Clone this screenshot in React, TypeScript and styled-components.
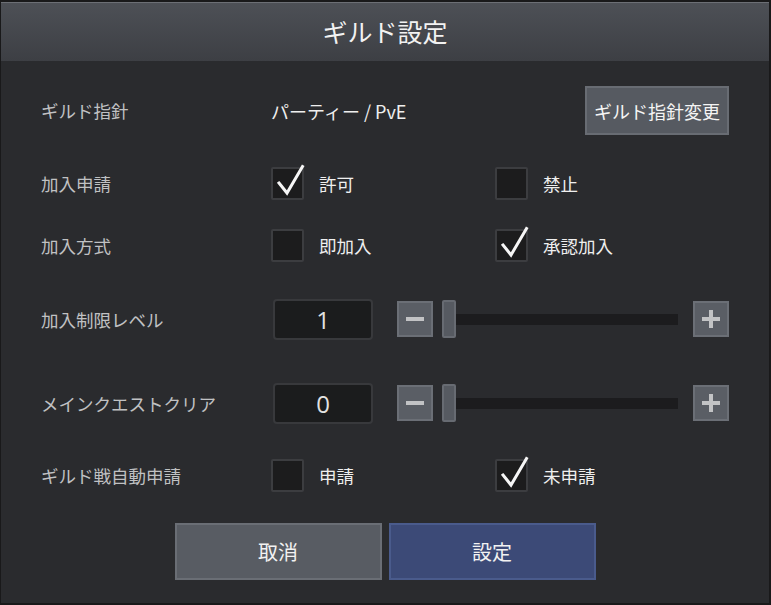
import styled, { createGlobalStyle } from "styled-components";

const GlobalStyle = createGlobalStyle`
  html, body {
    margin: 0;
    padding: 0;
    background: #161617;
  }
  * {
    box-sizing: border-box;
  }
`;

const Frame = styled.div`
  width: 771px;
  height: 605px;
  display: flex;
  flex-direction: column;
  background: #2a2b2e;
  border-top: 2px solid #19191a;
  border-left: 1px solid #19191a;
  border-right: 2px solid #19191a;
  border-bottom: 2px solid #19191a;
  font-family: "Noto Sans CJK JP", "Noto Sans", sans-serif;
  overflow: hidden;
`;

const TitleBar = styled.div`
  height: 59px;
  flex: none;
  display: flex;
  align-items: center;
  justify-content: center;
  background: linear-gradient(#4d5056, #3d3f44);
  border-top: 1px solid #6c6f75;
  color: #f2f2f2;
  font-size: 25px;
  padding-bottom: 2px;
`;

const Body = styled.div`
  flex: 1;
  padding: 19px 40px 0 40px;
  display: flex;
  flex-direction: column;
`;

const Row = styled.div<{ $h: number }>`
  height: ${(p) => p.$h}px;
  display: grid;
  grid-template-columns: 230px 224px 1fr;
  align-items: center;
`;

const SliderRow = styled.div<{ $h: number }>`
  height: ${(p) => p.$h}px;
  display: grid;
  grid-template-columns: 230px 1fr;
  align-items: center;
`;

const Label = styled.div`
  color: #c0c1c3;
  font-size: 17.5px;
`;

const Value = styled.div`
  color: #efefef;
  font-size: 18px;
`;

const ActionButton = styled.button`
  justify-self: end;
  width: 144px;
  height: 49px;
  background: #565a61;
  border: 2px solid #686c73;
  color: #f4f4f4;
  font-family: inherit;
  font-size: 18px;
  padding: 0;
`;

const Option = styled.label`
  display: flex;
  align-items: center;
  gap: 15px;
  color: #efefef;
  font-size: 17.5px;
`;

const Box = styled.span`
  position: relative;
  width: 33px;
  height: 33px;
  background: #1c1c1d;
  border: 2px solid #3c3d40;
  border-radius: 2px;
  flex: none;

  svg {
    position: absolute;
    left: 2px;
    top: -6px;
    overflow: visible;
  }
`;

function Check({ on, text }: { on?: boolean; text: string }) {
  return (
    <Option>
      <Box>
        {on && (
          <svg width="28" height="32" viewBox="0 0 28 32">
            <path d="M4 20 L12 30 L27.5 3.5" fill="none" stroke="#f6f6f6" strokeWidth="3" strokeLinecap="square" />
          </svg>
        )}
      </Box>
      {text}
    </Option>
  );
}

const SliderWrap = styled.div`
  display: flex;
  align-items: center;
`;

const NumberBox = styled.div`
  width: 100px;
  height: 41px;
  margin-left: 2px;
  margin-right: 24px;
  background: #1b1c1d;
  border: 2px solid #38393c;
  border-radius: 4px;
  display: flex;
  align-items: center;
  justify-content: center;
  color: #e2e2e2;
  font-family: "Open Sans", "Noto Sans", sans-serif;
  font-size: 24px;
`;

const StepButton = styled.div`
  width: 36px;
  height: 36px;
  flex: none;
  background: #5a5e65;
  border: 2px solid #6b6f76;
  display: flex;
  align-items: center;
  justify-content: center;
`;

const Track = styled.div`
  flex: 1;
  height: 11px;
  margin: 0 15px 0 9px;
  background: #1c1c1e;
  position: relative;
  display: flex;
  align-items: center;
`;

const Thumb = styled.div`
  position: absolute;
  left: 0;
  width: 14px;
  height: 38px;
  background: #565a61;
  border: 2px solid #676b72;
  border-radius: 2px;
`;

function Slider({ value }: { value: number }) {
  return (
    <SliderWrap>
      <NumberBox>{value}</NumberBox>
      <StepButton>
        <svg width="20" height="20" viewBox="0 0 20 20">
          <rect x="1" y="8" width="18" height="4" fill="#c2c3c5" />
        </svg>
      </StepButton>
      <Track>
        <Thumb />
      </Track>
      <StepButton>
        <svg width="20" height="20" viewBox="0 0 20 20">
          <rect x="1" y="8" width="18" height="4" fill="#c2c3c5" />
          <rect x="8" y="1" width="4" height="18" fill="#c2c3c5" />
        </svg>
      </StepButton>
    </SliderWrap>
  );
}

const Footer = styled.div`
  display: flex;
  justify-content: center;
  gap: 7px;
  margin-top: 7px;
`;

const FooterButton = styled.button<{ $primary?: boolean }>`
  width: 207px;
  height: 57px;
  background: ${(p) => (p.$primary ? "#3c4a77" : "#585c63")};
  border: 2px solid ${(p) => (p.$primary ? "#4a5b8c" : "#6a6e75")};
  color: #f2f2f2;
  font-family: inherit;
  font-size: 20px;
  padding: 0;
`;

export default function App() {
  return (
    <>
      <GlobalStyle />
      <Frame>
        <TitleBar>ギルド設定</TitleBar>
        <Body>
          <Row $h={61}>
            <Label>ギルド指針</Label>
            <Value>パーティー / PvE</Value>
            <ActionButton>ギルド指針変更</ActionButton>
          </Row>
          <Row $h={84}>
            <Label>加入申請</Label>
            <Check on text="許可" />
            <Check text="禁止" />
          </Row>
          <Row $h={41}>
            <Label>加入方式</Label>
            <Check text="即加入" />
            <Check on text="承認加入" />
          </Row>
          <SliderRow $h={106}>
            <Label>加入制限レベル</Label>
            <Slider value={1} />
          </SliderRow>
          <SliderRow $h={62}>
            <Label>メインクエストクリア</Label>
            <Slider value={0} />
          </SliderRow>
          <Row $h={82}>
            <Label>ギルド戦自動申請</Label>
            <Check text="申請" />
            <Check on text="未申請" />
          </Row>
          <Footer>
            <FooterButton>取消</FooterButton>
            <FooterButton $primary>設定</FooterButton>
          </Footer>
        </Body>
      </Frame>
    </>
  );
}
